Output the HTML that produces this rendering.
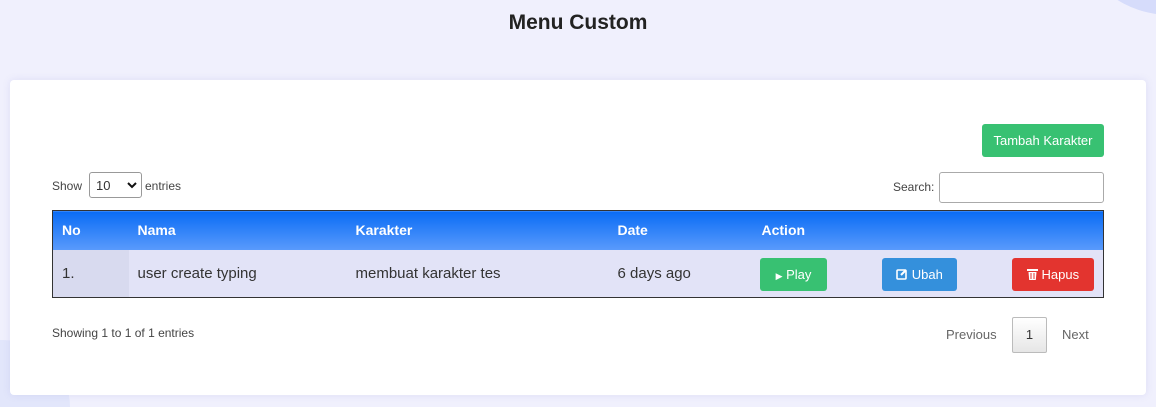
<!DOCTYPE html>
<html><head><style>
*{box-sizing:border-box;margin:0;padding:0}
html,body{width:1156px;height:407px;overflow:hidden}
body{background:#f0f0fd;font-family:"Liberation Sans",sans-serif;position:relative;color:#333}
.wrap{position:absolute;left:0;top:0;width:1156px;height:407px;overflow:hidden}
.c1{position:absolute;left:1086px;top:-120px;width:170px;height:135px;border-radius:50%;background:#d6dcfb}
.c2{position:absolute;left:-80px;top:340px;width:150px;height:67px;border-radius:75px 75px 0 0;background:#e2e6fb}
h1{position:absolute;top:11px;left:0;width:1156px;text-align:center;font-size:21px;font-weight:bold;color:#222}
.card{position:absolute;left:10px;top:80px;width:1136px;height:315px;background:#fff;border-radius:4px;box-shadow:0 0 8px rgba(120,120,200,.15)}
.abs{position:absolute}
.btn{position:absolute;color:#fff;font-size:13px;border-radius:3px;text-align:center}
table{position:absolute;left:42px;top:130px;width:1052px;border-collapse:collapse;border:1px solid #333;font-size:14px}
th{height:39px;text-align:left;color:#fff;background:linear-gradient(#0a6cf5,#5a9bfc);padding-left:9px;font-size:14px}
td{height:48px;background:#e2e3f7;padding-left:9px;font-size:15px;color:#333}
</style></head><body>
<div class="wrap"><div class="c1"></div><div class="c2"></div></div>
<h1>Menu Custom</h1>
<div class="card">
<div class="btn" style="left:972px;top:44px;width:122px;height:33px;line-height:33px;background:#38c172">Tambah Karakter</div>
<div class="abs" style="left:42px;top:99px;font-size:12px;color:#444">Show</div>
<div class="abs" style="left:79px;top:92px;width:53px;height:26px;border:1px solid #999;border-radius:3px;font-size:13px;padding:5px 6px">10
<svg style="position:absolute;right:4px;top:9px" width="10" height="7" viewBox="0 0 10 7"><path d="M1 1l4 4 4-4" stroke="#111" stroke-width="2" fill="none"/></svg></div>
<div class="abs" style="left:135px;top:99px;font-size:12px;color:#444">entries</div>
<div class="abs" style="left:883px;top:100px;font-size:12px;color:#444">Search:</div>
<div class="abs" style="left:929px;top:92px;width:165px;height:31px;border:1px solid #aaa;border-radius:3px"></div>
<table>
<tr><th style="width:76px">No</th><th style="width:218px">Nama</th><th style="width:262px">Karakter</th><th style="width:144px">Date</th><th>Action</th></tr>
<tr><td style="background:#d8daef">1.</td><td>user create typing</td><td>membuat karakter tes</td><td>6 days ago</td><td></td></tr>
</table>
<div class="btn" style="left:750px;top:178px;width:67px;height:33px;line-height:33px;background:#38c172"><span style="font-size:9px">&#9654;</span> Play</div>
<div class="btn" style="left:872px;top:178px;width:75px;height:33px;line-height:33px;background:#3490dc"><svg width="12" height="12" viewBox="0 0 12 12" style="vertical-align:-1px"><rect x="1" y="2" width="9" height="9" rx="1" fill="none" stroke="#fff" stroke-width="1.6"/><path d="M5 7l5-5" stroke="#fff" stroke-width="2"/></svg> Ubah</div>
<div class="btn" style="left:1002px;top:178px;width:82px;height:33px;line-height:33px;background:#e3342f"><svg width="11" height="12" viewBox="0 0 11 12" style="vertical-align:-1px"><rect x="0" y="1" width="11" height="2" fill="#fff"/><path d="M1.5 4h8l-.7 8h-6.6z" fill="#fff"/><path d="M4 5v6M7 5v6" stroke="#e3342f"/></svg> Hapus</div>
<div class="abs" style="left:42px;top:246px;font-size:12px;color:#444">Showing 1 to 1 of 1 entries</div>
<div class="abs" style="left:936px;top:247px;font-size:13px;color:#666">Previous</div>
<div class="abs" style="left:1002px;top:237px;width:35px;height:36px;border:1px solid #bbb;border-radius:2px;background:linear-gradient(#fff,#e6e6e6);text-align:center;line-height:34px;font-size:13px">1</div>
<div class="abs" style="left:1052px;top:247px;font-size:13px;color:#666">Next</div>
</div>
</body></html>
